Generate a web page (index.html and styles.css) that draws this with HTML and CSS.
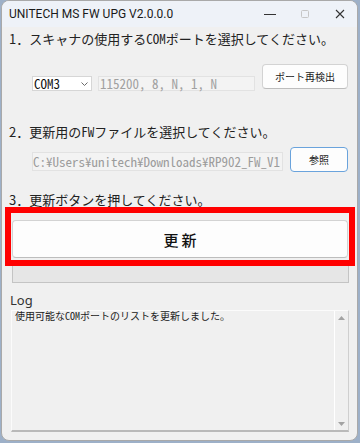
FILE: index.html
```html
<!DOCTYPE html>
<html lang="ja">
<head>
<meta charset="utf-8">
<title>UNITECH MS FW UPG</title>
<link rel="stylesheet" href="styles.css">
</head>
<body>
<div class="window">
  <div class="titlebar">
    <span class="title">UNITECH MS FW UPG V2.0.0.0</span>
    <div class="controls">
      <span class="ctl"><svg width="12" height="12" viewBox="0 0 12 12"><line x1="0" y1="6.5" x2="12" y2="6.5" stroke="#333" stroke-width="1"/></svg></span>
      <span class="ctl"><svg width="10" height="10" viewBox="0 0 10 10"><rect x="1.5" y="1.5" width="7" height="7" rx="1" fill="none" stroke="#c6c6c6" stroke-width="1"/></svg></span>
      <span class="ctl"><svg width="10" height="10" viewBox="0 0 10 10"><path d="M1 1L9 9M9 1L1 9" stroke="#333" stroke-width="1.1" fill="none"/></svg></span>
    </div>
  </div>
  <div class="content">
    <p class="step step1">1．スキャナの使用する<span class="hw">COM</span>ポートを選択してください。</p>
    <div class="row row1">
      <div class="combo"><span class="hw">COM3</span><svg class="chev" width="7" height="4" viewBox="0 0 7 4"><path d="M0.5 0.5L3.5 3.5L6.5 0.5" stroke="#6a6a6a" fill="none" stroke-width="1"/></svg></div>
      <div class="field baud hw">115200, 8, N, 1, N</div>
      <button class="btn btn-rescan">ポート再検出</button>
    </div>
    <p class="step step2">2．更新用の<span class="hw">FW</span>ファイルを選択してください。</p>
    <div class="row row2">
      <div class="field path hw">C:¥Users¥unitech¥Downloads¥RP902_FW_V1</div>
      <button class="btn btn-browse">参照</button>
    </div>
    <p class="step step3">3．更新ボタンを押してください。</p>
    <div class="update">
      <button class="btn btn-update">更新</button>
      <div class="highlight"></div>
    </div>
    <div class="progress"></div>
    <div class="log-label">Log</div>
    <div class="log">
      <div class="log-text">使用可能な<span class="hw">COM</span>ポートのリストを更新しました。</div>
      <div class="scroll">
        <svg width="7" height="4" viewBox="0 0 7 4"><path d="M0 4L3.5 0L7 4Z" fill="#a3a3a3"/></svg>
        <svg width="7" height="4" viewBox="0 0 7 4"><path d="M0 0L3.5 4L7 0Z" fill="#a3a3a3"/></svg>
      </div>
    </div>
  </div>
</div>
</body>
</html>
```
FILE: styles.css
```css
html, body {
  margin: 0;
  padding: 0;
}
body {
  width: 360px;
  height: 443px;
  overflow: hidden;
  background: #9db0c8;
}
.window {
  margin-left: 1px;
  width: 357px;
  height: 441px;
  box-sizing: border-box;
  border: 1px solid #a9a9a9;
  border-radius: 8px;
  background: #f0f0f0;
  overflow: hidden;
  font-family: "Noto Sans CJK JP", sans-serif;
  color: #222;
}
.titlebar {
  height: 26px;
  background: #eef2f8;
  display: flex;
  align-items: center;
  padding-left: 7px;
}
.title {
  font-family: Roboto, "Noto Sans", sans-serif;
  font-size: 12px;
  color: #1a1a1a;
  white-space: nowrap;
}
.controls {
  margin-left: auto;
  display: flex;
}
.ctl {
  width: 35px;
  height: 26px;
  display: flex;
  align-items: center;
  justify-content: center;
}
.hw {
  font-feature-settings: "hwid" 1;
}
.step {
  margin: 0 0 0 7px;
  font-size: 13px;
  line-height: 16px;
  white-space: nowrap;
  color: #222;
}
.step1 { margin-top: 4px; }
.step2 { margin-top: 33px; }
.step3 { margin-top: 20px; }
.row {
  display: flex;
  align-items: flex-start;
  margin-left: 30px;
}
.row1 { margin-top: 17px; }
.row2 { margin-top: 7px; }
.combo {
  margin-top: 12px;
  width: 60px;
  height: 15px;
  box-sizing: border-box;
  background: #fff;
  border: 1px solid #d6d6d6;
  display: flex;
  align-items: center;
  justify-content: space-between;
  padding: 0 3px 0 1px;
  font-size: 13px;
  line-height: 13px;
  color: #111;
}
.field {
  box-sizing: border-box;
  background: #f3f3f3;
  border: 1px solid #e2e2e2;
  color: #a0a0a0;
  font-size: 13px;
  white-space: nowrap;
}
.baud {
  margin-left: 6px;
  margin-top: 12px;
  width: 157px;
  height: 15px;
  line-height: 13px;
  padding-left: 1px;
}
.path {
  margin-top: 5px;
  width: 251px;
  height: 19px;
  line-height: 17px;
  padding-left: 0;
  color: #9c9c9c;
}
.btn {
  font-family: "Noto Sans CJK JP", sans-serif;
  font-size: 10px;
  background: #fdfdfd;
  border: 1px solid #d3d3d3;
  border-bottom-color: #bdbdbd;
  border-radius: 4px;
  height: 25px;
  padding: 0;
  color: #1a1a1a;
  box-sizing: border-box;
}
.btn-rescan {
  margin-left: 7px;
  width: 86px;
}
.btn-browse {
  margin-left: 7px;
  width: 58px;
  border-color: #6aa3dc;
}
.update {
  position: relative;
  margin: 12px 0 0 10px;
  width: 336px;
}
.btn-update {
  display: block;
  width: 336px;
  height: 38px;
  font-size: 15px;
  font-weight: 500;
  letter-spacing: 3px;
  padding-left: 3px;
  color: #111;
}
.highlight {
  position: absolute;
  left: -7px;
  top: -13px;
  width: 350px;
  height: 59px;
  box-sizing: border-box;
  border: 6px solid #ff0000;
}
.progress {
  margin: 4px 0 0 10px;
  width: 337px;
  height: 21px;
  box-sizing: border-box;
  background: #e6e6e6;
  border: 1px solid #c4c4c4;
}
.log-label {
  margin: 9px 0 0 8px;
  font-family: "Noto Sans", sans-serif;
  font-size: 13px;
  line-height: 16px;
  color: #333;
}
.log {
  margin: 2px 0 0 9px;
  width: 338px;
  height: 122px;
  box-sizing: border-box;
  border-top: 1px solid #fbfbfb;
  border-left: 1px solid #fbfbfb;
  border-right: 1px solid #cfcfcf;
  border-bottom: 2px solid #b9b9b9;
  display: flex;
}
.log-text {
  flex: 1;
  padding-left: 3px;
  font-size: 10px;
  line-height: 10px;
  color: #222;
  white-space: nowrap;
}
.scroll {
  width: 13px;
  border-left: 1px solid #ffffff;
  display: flex;
  flex-direction: column;
  justify-content: space-between;
  align-items: center;
  padding: 5px 0 4px;
}
```
